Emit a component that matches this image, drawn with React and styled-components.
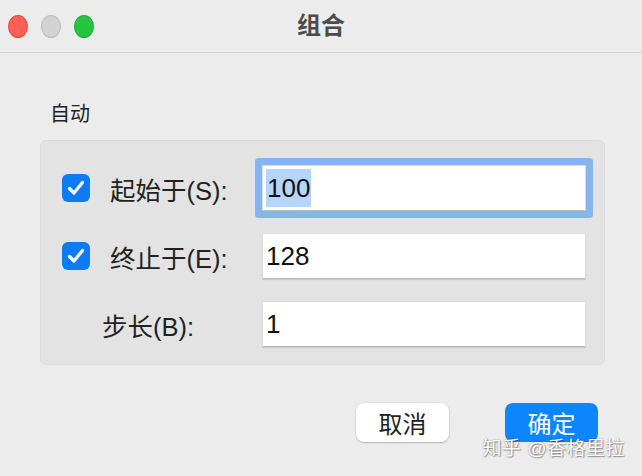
import styled, { createGlobalStyle } from "styled-components";

const GlobalStyle = createGlobalStyle`
  html, body {
    margin: 0;
    padding: 0;
    background: #ececec;
  }
  body {
    font-family: "Liberation Sans", "Noto Sans CJK SC", sans-serif;
  }
`;

const Window = styled.div`
  position: relative;
  width: 642px;
  height: 476px;
  background: #ececec;
  overflow: hidden;
  display: flex;
  flex-direction: column;
`;

const TitleBar = styled.div`
  height: 52px;
  border-bottom: 1px solid #d3d3d3;
  display: grid;
  grid-template-columns: 1fr auto 1fr;
  align-items: center;
`;

const Lights = styled.div`
  display: flex;
  gap: 13px;
  padding-left: 8px;
`;

const Light = styled.span`
  width: 20px;
  height: 23px;
  border-radius: 50%;
  box-sizing: border-box;
  background: ${(p) => p.color};
  border: 1px solid ${(p) => p.edge};
`;

const Title = styled.div`
  font-size: 24px;
  font-weight: bold;
  color: #4b4b4b;
  line-height: 28px;
`;

const Content = styled.div`
  padding: 0 37px 0 40px;
  display: flex;
  flex-direction: column;
`;

const SectionLabel = styled.div`
  margin: 50px 0 15px 10px;
  font-size: 20px;
  line-height: 22px;
  color: #222;
`;

const Group = styled.div`
  height: 225px;
  box-sizing: border-box;
  background: #e3e3e3;
  border: 1px solid #dcdcdc;
  border-radius: 6px;
  padding: 24px 18px 0 21px;
  display: flex;
  flex-direction: column;
  gap: 22px;
`;

const Row = styled.div`
  display: flex;
  align-items: center;
  height: 46px;
  padding-left: ${(p) => p.$indent || 0}px;
`;

const Check = styled.span`
  width: 28px;
  height: 28px;
  border-radius: 6px;
  background: #0c7cf6;
  display: flex;
  align-items: center;
  justify-content: center;
  margin-right: 20px;
  flex-shrink: 0;
`;

const Label = styled.label`
  width: ${(p) => p.$width}px;
  font-size: 25.5px;
  color: #222;
  flex-shrink: 0;
`;

const Field = styled.div`
  width: 325px;
  height: 46px;
  box-sizing: border-box;
  background: #fff;
  border: 1px solid #dedede;
  border-bottom-color: #b9b9b9;
  border-radius: 1px;
  box-shadow: ${(p) =>
    p.$focused ? "0 0 0 7px #85b4ef" : "0 1px 1px rgba(0,0,0,0.12)"};
  font-size: 26px;
  color: #111;
  display: flex;
  align-items: center;
  padding-left: 3px;
`;

const Selected = styled.span`
  background: #b4d6fd;
  line-height: 38px;
  padding: 0 1px;
`;

const Buttons = styled.div`
  display: flex;
  justify-content: flex-end;
  gap: 56px;
  margin: 38px 7px 0 0;
`;

const Button = styled.button`
  width: 93px;
  height: 39px;
  border: none;
  border-radius: 8px;
  font-family: inherit;
  font-size: 24px;
  padding: 0;
  background: ${(p) => (p.$primary ? "#0d86fc" : "#fff")};
  color: ${(p) => (p.$primary ? "#fff" : "#222")};
  box-shadow: ${(p) =>
    p.$primary ? "none" : "0 1px 2px rgba(0,0,0,0.2), 0 0 0 0.5px rgba(0,0,0,0.08)"};
`;

const Watermark = styled.div`
  position: absolute;
  right: 17px;
  bottom: 16px;
  font-size: 19px;
  color: #fff;
  letter-spacing: 0.5px;
  text-shadow: 0 0 2px rgba(0, 0, 0, 0.45), 1px 1px 1px rgba(0, 0, 0, 0.3);
`;

const CheckMark = () => (
  <svg width="18" height="16" viewBox="0 0 18 16">
    <path
      d="M2.5 8.5 L7 13 L15.5 2.5"
      fill="none"
      stroke="#fff"
      strokeWidth="3.2"
      strokeLinecap="round"
      strokeLinejoin="round"
    />
  </svg>
);

const App = () => {
  return (
    <Window>
      <GlobalStyle />
      <TitleBar>
        <Lights>
          <Light color="#fe5f57" edge="#e9493f" />
          <Light color="#d3d3d3" edge="#bcbcbc" />
          <Light color="#27c43f" edge="#1fae34" />
        </Lights>
        <Title>组合</Title>
        <div />
      </TitleBar>

      <Content>
        <SectionLabel>自动</SectionLabel>
        <Group>
          <Row>
            <Check>
              <CheckMark />
            </Check>
            <Label $width={152}>起始于(S):</Label>
            <Field $focused>
              <Selected>100</Selected>
            </Field>
          </Row>
          <Row>
            <Check>
              <CheckMark />
            </Check>
            <Label $width={152}>终止于(E):</Label>
            <Field>128</Field>
          </Row>
          <Row $indent={40}>
            <Label $width={160}>步长(B):</Label>
            <Field>1</Field>
          </Row>
        </Group>
        <Buttons>
          <Button>取消</Button>
          <Button $primary>确定</Button>
        </Buttons>
      </Content>

      <Watermark>知乎 @香格里拉</Watermark>
    </Window>
  );
};

export default App;
